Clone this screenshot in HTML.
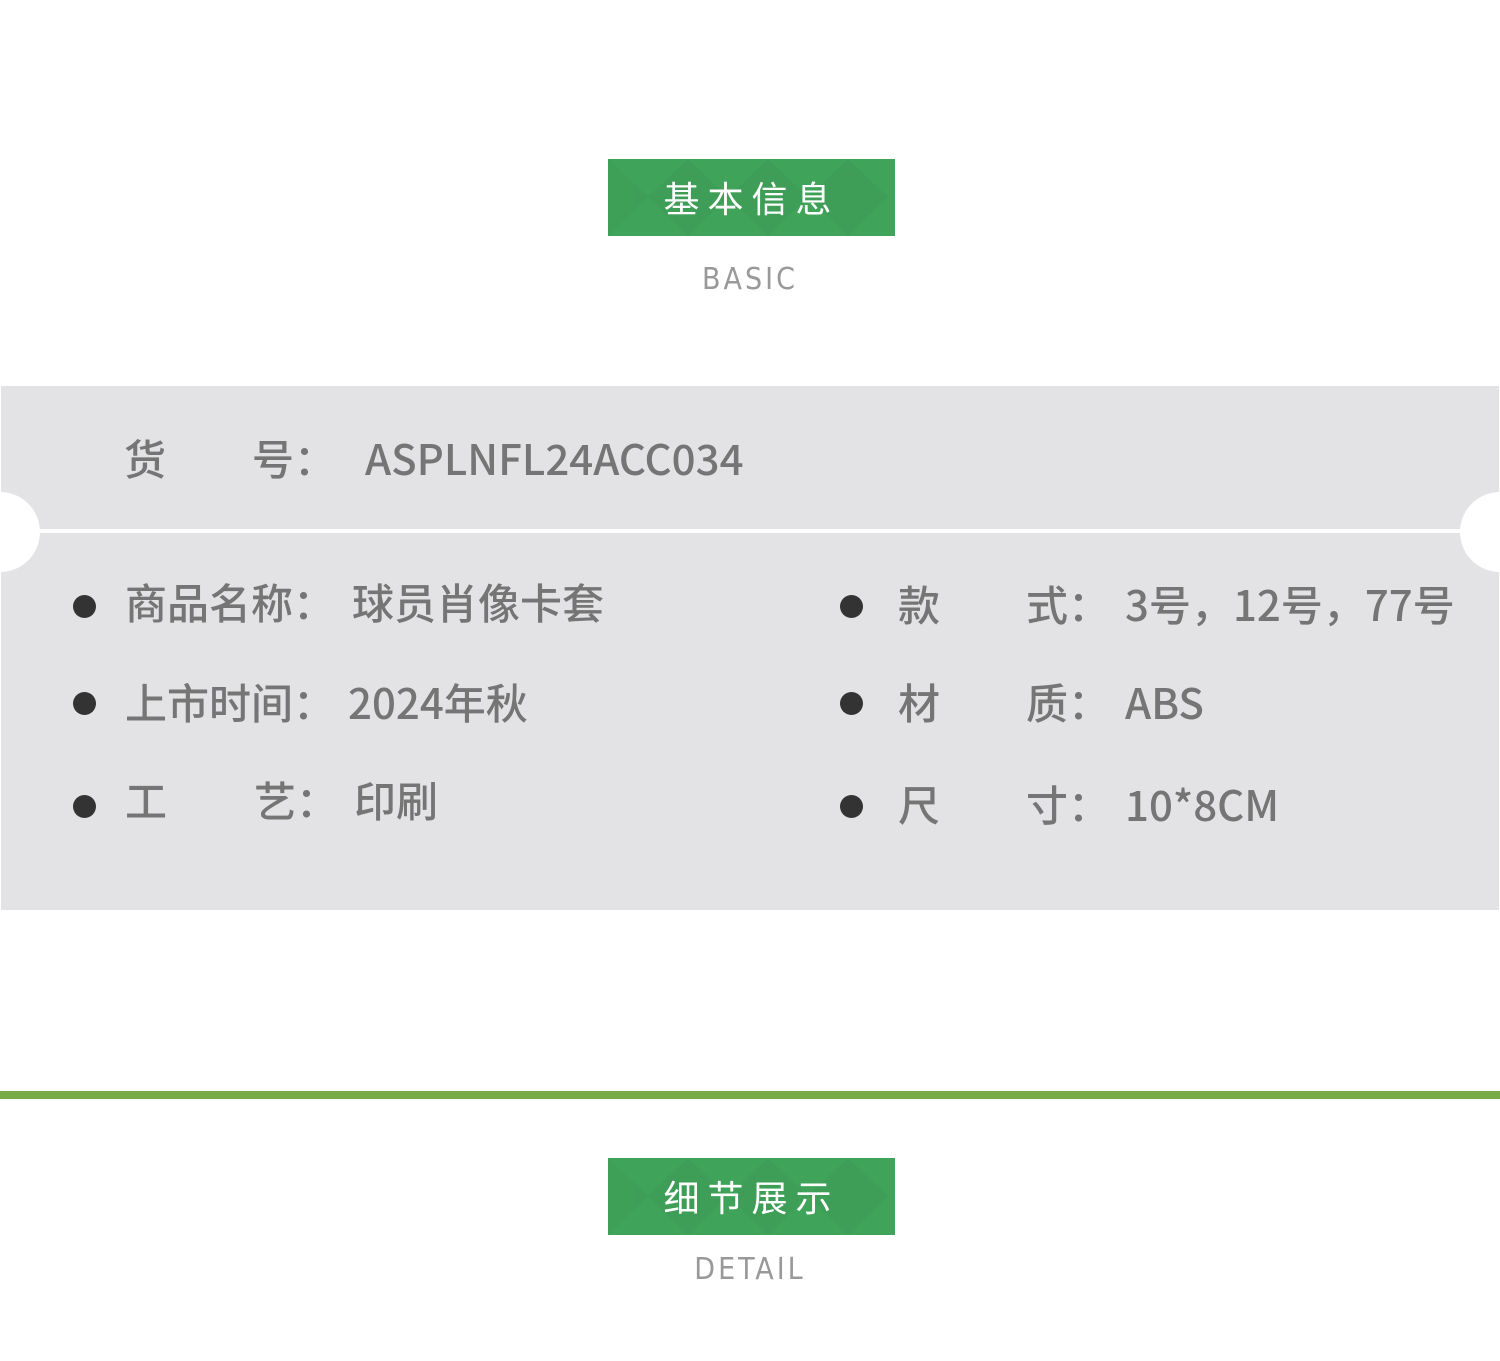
<!DOCTYPE html>
<html><head><meta charset="utf-8"><style>
*{margin:0;padding:0}
body{width:1500px;height:1361px;background:#fff;position:relative;overflow:hidden;font-family:"Noto Sans CJK SC","Liberation Sans",sans-serif}
.t{position:absolute;color:#757575;font-size:42px;line-height:1;white-space:nowrap;font-weight:500;margin-top:-3px}
.b{position:absolute;width:23px;height:23px;border-radius:50%;background:#333}
.lab{position:absolute;left:608px;width:287px;height:77px;background:#40a35a;color:#fff;font-size:36px;letter-spacing:8px;text-align:center;line-height:77px;overflow:hidden}
.lab svg{position:absolute;left:0;top:0}
.lab span{position:relative}
.en{position:absolute;left:0;width:1500px;text-align:center;color:#999;font-size:30px;letter-spacing:3px;font-family:"DejaVu Sans Condensed","Liberation Sans",sans-serif}
</style></head><body>
<div class="lab" style="top:159px"><svg width="287" height="77"><g fill="#000" opacity="0.025"><polygon points="0,0 40,38 0,77"/><polygon points="80,0 120,38 80,77 40,38"/><polygon points="160,0 200,38 160,77 120,38"/><polygon points="240,0 280,38 240,77 200,38"/></g></svg><span>基本信息</span></div>
<div class="en" style="top:262px">BASIC</div>
<div style="position:absolute;left:1px;top:386px;width:1498px;height:524px;background:#e3e3e5"></div>
<div style="position:absolute;left:40px;top:529px;width:1420px;height:4px;background:#fff"></div>
<div style="position:absolute;left:-40px;top:492px;width:80px;height:80px;border-radius:50%;background:#fff"></div>
<div style="position:absolute;left:1460px;top:492px;width:80px;height:80px;border-radius:50%;background:#fff"></div>
<div class="t" style="left:124px;top:440px">货</div>
<div class="t" style="left:252px;top:440px">号：</div>
<div class="t" style="left:365px;top:440px">ASPLNFL24ACC034</div>

<div class="b" style="left:73px;top:595px"></div>
<div class="t" style="left:125px;top:584px">商品名称：</div>
<div class="t" style="left:352px;top:584px">球员肖像卡套</div>
<div class="b" style="left:73px;top:692px"></div>
<div class="t" style="left:125px;top:684px">上市时间：</div>
<div class="t" style="left:348px;top:684px">2024年秋</div>
<div class="b" style="left:73px;top:795px"></div>
<div class="t" style="left:125px;top:782px">工</div>
<div class="t" style="left:254px;top:782px">艺：</div>
<div class="t" style="left:354px;top:782px">印刷</div>

<div class="b" style="left:840px;top:595px"></div>
<div class="t" style="left:898px;top:586px">款</div>
<div class="t" style="left:1026px;top:586px">式：</div>
<div class="t" style="left:1125px;top:586px">3号，12号，77号</div>
<div class="b" style="left:840px;top:692px"></div>
<div class="t" style="left:898px;top:684px">材</div>
<div class="t" style="left:1026px;top:684px">质：</div>
<div class="t" style="left:1125px;top:684px">ABS</div>
<div class="b" style="left:840px;top:795px"></div>
<div class="t" style="left:898px;top:786px">尺</div>
<div class="t" style="left:1026px;top:786px">寸：</div>
<div class="t" style="left:1125px;top:786px">10*8CM</div>

<div style="position:absolute;left:0;top:1091px;width:1500px;height:8px;background:#76ab47"></div>
<div class="lab" style="top:1158px"><svg width="287" height="77"><g fill="#000" opacity="0.025"><polygon points="0,0 40,38 0,77"/><polygon points="80,0 120,38 80,77 40,38"/><polygon points="160,0 200,38 160,77 120,38"/><polygon points="240,0 280,38 240,77 200,38"/></g></svg><span>细节展示</span></div>
<div class="en" style="top:1252px">DETAIL</div>
</body></html>
